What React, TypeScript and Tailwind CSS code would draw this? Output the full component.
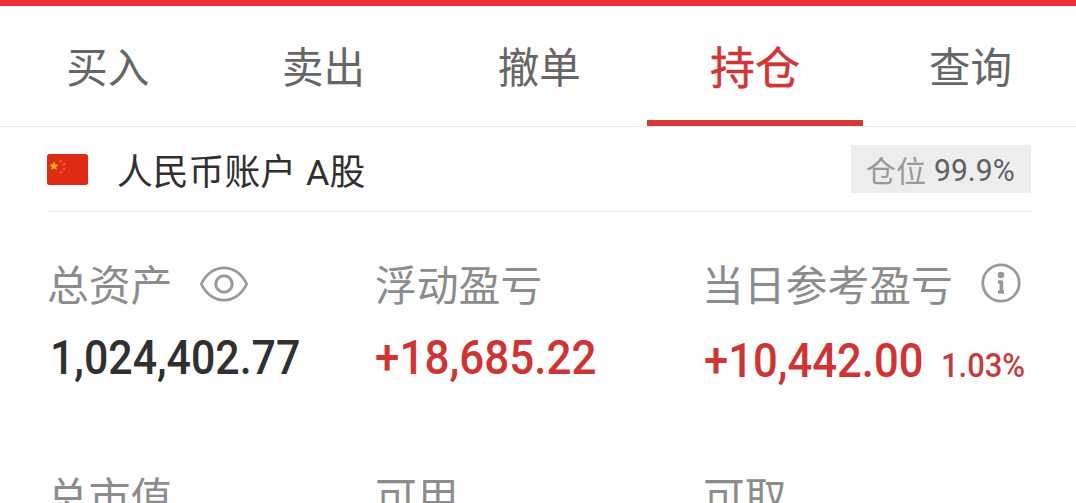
import clsx from 'clsx';

const TABS = ['买入', '卖出', '撤单', '持仓', '查询'];
const ACTIVE_TAB = '持仓';

const FIGURE = "block w-max origin-left whitespace-nowrap font-['Roboto',sans-serif] font-medium";

function ChinaFlag() {
  return (
    <svg width="41" height="31" viewBox="0 0 41 31" className="shrink-0">
      <rect width="41" height="31" rx="2.5" fill="#df2a14" />
      <path
        d="M7 7.6l1.3 3 3.1.2-2.4 2.1.8 3.1L7 14.3l-2.8 1.7.8-3.1-2.4-2.1 3.1-.2z"
        fill="#fcb51d"
      />
      <g fill="#ee6420">
        <circle cx="13.7" cy="7.2" r="1.3" />
        <circle cx="17" cy="10.2" r="1.3" />
        <circle cx="17" cy="15" r="1.3" />
        <circle cx="14" cy="18.2" r="1.3" />
      </g>
    </svg>
  );
}

function EyeIcon() {
  return (
    <svg width="50" height="38" viewBox="0 0 50 38" fill="none" stroke="#999" strokeWidth="2.7">
      <path d="M2.3 19C7 9 15.5 2.9 25 2.9S43 9 47.7 19C43 29 34.5 35.1 25 35.1S7 29 2.3 19z" strokeLinejoin="round" />
      <circle cx="25" cy="19" r="8.2" strokeWidth="3" />
    </svg>
  );
}

function InfoIcon() {
  return (
    <svg width="40" height="40" viewBox="0 0 40 40" fill="none">
      <circle cx="20" cy="20" r="18.2" stroke="#999" strokeWidth="2.8" />
      <circle cx="20" cy="12" r="3.3" fill="#999" />
      <path d="M17 19h3.4v10M17 29h6" stroke="#999" strokeWidth="3.6" strokeLinejoin="round" />
    </svg>
  );
}

export default function App() {
  return (
    <div className="h-[503px] w-[1076px] overflow-hidden border-t-6 border-[#f22d35] bg-[#fefefe] font-['Noto_Sans_CJK_SC',sans-serif]">
      {/* Trade tabs */}
      <nav className="grid h-[121px] grid-cols-[repeat(5,215.7px)] border-b border-[#e9e9e9]">
        {TABS.map((tab) => (
          <button
            key={tab}
            className={clsx(
              'flex items-center justify-center border-b-6 leading-none',
              tab === ACTIVE_TAB
                ? 'border-[#d93636] text-[45px] text-[#d23535] [-webkit-text-stroke:0.4px_#d23535]'
                : 'border-transparent pt-0.5 text-[41.5px] text-[#666]'
            )}
          >
            <span className="pt-1">{tab}</span>
          </button>
        ))}
      </nav>

      {/* Account */}
      <div className="mx-[47px] flex h-[85px] w-[984px] items-center border-b border-[#ebebeb]">
        <ChinaFlag />
        <span className="ml-[29px] pt-[5px] text-[35.8px] leading-none text-[#303030] [word-spacing:2px]">
          人民币账户 <span className="font-['Roboto',sans-serif]">A</span>股
        </span>
        <div className="ml-auto flex h-12 w-[180px] items-center bg-[#ededed] pl-[15px]">
          <span className="text-[30px] leading-none text-[#999]">仓位</span>
          <span className="ml-2 origin-left scale-x-[0.97] pt-0.5 font-['Roboto',sans-serif] text-[31px] leading-none text-[#606060]">
            99.9%
          </span>
        </div>
      </div>

      {/* Totals */}
      <div className="ml-[47px] grid grid-cols-[328px_327px_1fr] pt-[51px] text-[41.8px] leading-none text-[#8c8c8c]">
        <div className="h-[212px]">
          <div className="flex h-[42px] items-center">
            总资产
            <span className="ml-[27px]"><EyeIcon /></span>
          </div>
          <span className={`${FIGURE} mt-[29px] ml-[3px] scale-x-[0.893] text-[48px] text-[#303030]`}>1,024,402.77</span>
        </div>
        <div>
          <div className="flex h-[42px] items-center">浮动盈亏</div>
          <span className={`${FIGURE} mt-[29px] scale-x-[0.917] text-[48px] text-[#cf3434]`}>+18,685.22</span>
        </div>
        <div>
          <div className="flex h-[42px] items-center">
            当日参考盈亏
            <span className="mb-0.5 ml-7"><InfoIcon /></span>
          </div>
          <div className="mt-8 flex items-baseline">
            <span className={`${FIGURE} ml-0.5 scale-x-[0.908] text-[48px] text-[#cf3434]`}>+10,442.00</span>
            <span className={`${FIGURE} -ml-[5px] scale-x-[0.91] text-[34px] text-[#c63c3c]`}>1.03%</span>
          </div>
        </div>
        <div>总市值</div>
        <div>可用</div>
        <div className="pl-px">可取</div>
      </div>
    </div>
  );
}
